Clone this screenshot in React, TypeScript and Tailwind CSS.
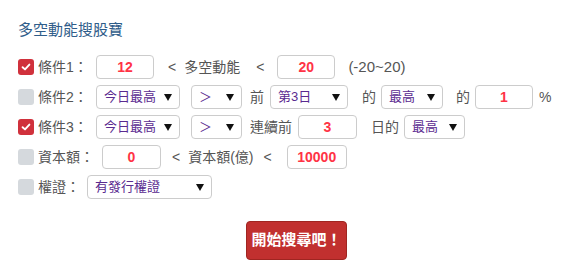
import { useState } from 'react'

const FONT = { fontFamily: '"Liberation Sans", "Noto Sans CJK TC", sans-serif' }

const Check = ({ on, onClick }: { on: boolean; onClick: () => void }) => (
	<div
		onClick={onClick}
		className={`w-4 h-4 rounded-[3px] flex items-center justify-center cursor-pointer shrink-0 ${
			on ? 'bg-[#d0313c]' : 'bg-[#d5d9dd]'
		}`}
	>
		{on && (
			<svg width="10" height="10" viewBox="0 0 10 10">
				<path d="M1.6 5.2 L4 7.4 L8.4 2.6" stroke="#fff" strokeWidth="1.9" fill="none" strokeLinecap="round" strokeLinejoin="round" />
			</svg>
		)}
	</div>
)

const Box = ({ value, className }: { value: string; className: string }) => (
	<input
		defaultValue={value}
		className={`h-6 border border-[#cccccc] rounded-[4px] text-center text-[14px] font-semibold text-[#ff3345] outline-none shrink-0 ${className}`}
		style={FONT}
	/>
)

const Sel = ({ value, className }: { value: string; className: string }) => (
	<div
		className={`h-6 border border-[#cccccc] rounded-[4px] flex items-center justify-between pl-[7px] pr-[7px] text-[13px] text-[#5a2a90] bg-white shrink-0 ${className}`}
	>
		<span className="whitespace-nowrap">{value}</span>
		<svg width="8" height="7" viewBox="0 0 8 7" className="shrink-0">
			<path d="M0 0 H8 L4 7 Z" fill="#111" />
		</svg>
	</div>
)

const Label = ({ children, className = '' }: { children: React.ReactNode; className?: string }) => (
	<span className={`text-[14px] text-[#555555] leading-6 whitespace-nowrap shrink-0 ${className}`}>{children}</span>
)

const App = () => {
	const [checks, setChecks] = useState([true, false, true, false, false])
	const toggle = (i: number) => setChecks((c) => c.map((v, idx) => (idx === i ? !v : v)))

	return (
		<div className="w-[587px] h-[275px] bg-white pl-[18px] pt-[20px]" style={FONT}>
			<p className="text-[15px] leading-5 text-[#2f5d8a]">多空動能搜股寶</p>

			<div className="mt-[15px] flex flex-col gap-[6px]">
				<div className="flex items-center">
					<Check on={checks[0]} onClick={() => toggle(0)} />
					<Label className="ml-1 w-[58px]">條件1：</Label>
					<Box value="12" className="w-[58px]" />
					<Label className="ml-[14px]">&lt;</Label>
					<Label className="ml-[8px]">多空動能</Label>
					<Label className="ml-[16px]">&lt;</Label>
					<Box value="20" className="w-[58px] ml-[13px]" />
					<Label className="ml-[13px] text-[15px]">(-20~20)</Label>
				</div>

				<div className="flex items-center">
					<Check on={checks[1]} onClick={() => toggle(1)} />
					<Label className="ml-1 w-[58px]">條件2：</Label>
					<Sel value="今日最高" className="w-[84px]" />
					<Sel value="＞" className="w-[51px] ml-[11px]" />
					<Label className="ml-[8px]">前</Label>
					<Sel value="第3日" className="w-[78px] ml-[6px]" />
					<Label className="ml-[14px]">的</Label>
					<Sel value="最高" className="w-[62px] ml-[5px]" />
					<Label className="ml-[13px]">的</Label>
					<Box value="1" className="w-[58px] ml-[5px]" />
					<Label className="ml-[6px]">%</Label>
				</div>

				<div className="flex items-center">
					<Check on={checks[2]} onClick={() => toggle(2)} />
					<Label className="ml-1 w-[58px]">條件3：</Label>
					<Sel value="今日最高" className="w-[84px]" />
					<Sel value="＞" className="w-[51px] ml-[11px]" />
					<Label className="ml-[8px]">連續前</Label>
					<Box value="3" className="w-[59px] ml-[6px]" />
					<Label className="ml-[14px]">日的</Label>
					<Sel value="最高" className="w-[61px] ml-[5px]" />
				</div>

				<div className="flex items-center">
					<Check on={checks[3]} onClick={() => toggle(3)} />
					<Label className="ml-1 w-[64px]">資本額：</Label>
					<Box value="0" className="w-[59px]" />
					<Label className="ml-[11px]">&lt;</Label>
					<Label className="ml-[8px]">資本額(億)</Label>
					<Label className="ml-[10px]">&lt;</Label>
					<Box value="10000" className="w-[60px] ml-[15px]" />
				</div>

				<div className="flex items-center">
					<Check on={checks[4]} onClick={() => toggle(4)} />
					<Label className="ml-1 w-[49px]">權證：</Label>
					<Sel value="有發行權證" className="w-[125px]" />
				</div>
			</div>

			<div className="flex justify-center pr-[12px] mt-[22px]">
				<button className="w-[101px] h-[39px] rounded-[4px] bg-[#c1302f] border border-[#9f2521] text-white text-[15px] font-bold">
					開始搜尋吧！
				</button>
			</div>
		</div>
	)
}

export default App
